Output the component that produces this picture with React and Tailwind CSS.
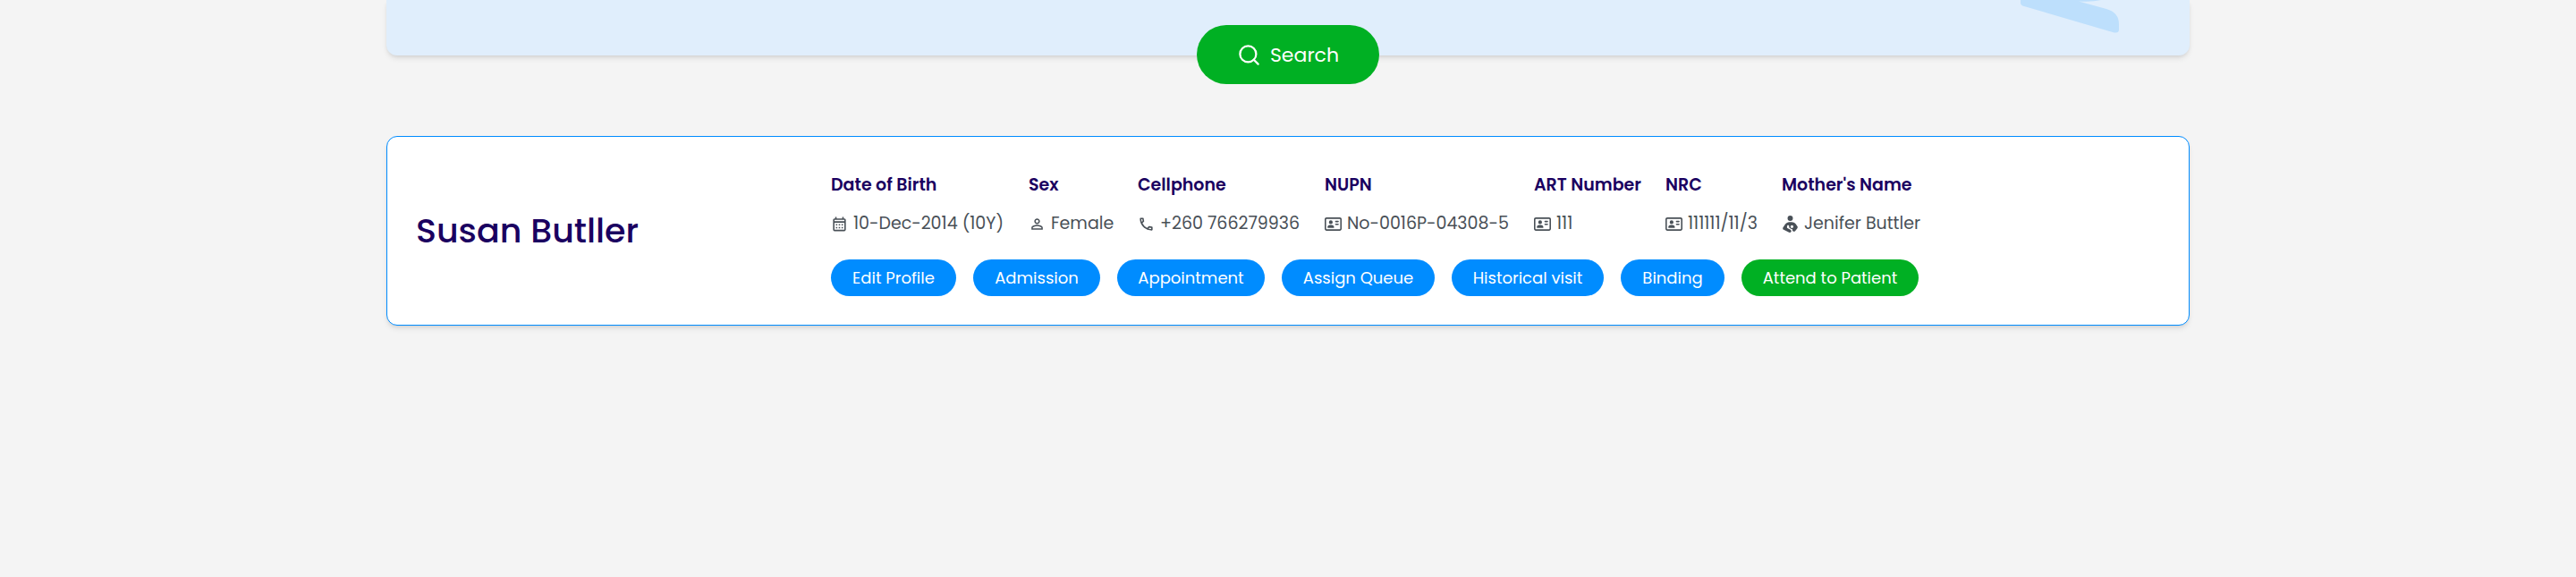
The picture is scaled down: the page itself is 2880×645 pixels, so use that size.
import { FiSearch } from "react-icons/fi";
import { MdOutlineCalendarMonth, MdOutlinePhone, MdPersonOutline } from "react-icons/md";
import { FaRegAddressCard, FaPersonBreastfeeding } from "react-icons/fa6";

const details = [
  { label: "Date of Birth", value: "10-Dec-2014 (10Y)", Icon: MdOutlineCalendarMonth, width: "min-w-[221px]" },
  { label: "Sex", value: "Female", Icon: MdPersonOutline, width: "min-w-[122px]" },
  { label: "Cellphone", value: "+260 766279936", Icon: MdOutlinePhone, width: "min-w-[209px]" },
  { label: "NUPN", value: "No-0016P-04308-5", Icon: FaRegAddressCard, width: "min-w-[234px]" },
  { label: "ART Number", value: "111", Icon: FaRegAddressCard, width: "min-w-[147px]" },
  { label: "NRC", value: "111111/11/3", Icon: FaRegAddressCard, width: "min-w-[130px]" },
  { label: "Mother's Name", value: "Jenifer Buttler", Icon: FaPersonBreastfeeding, width: "min-w-[160px]" },
];

const actions = [
  { label: "Edit Profile", style: "min-w-[140px] bg-[#008cff]" },
  { label: "Admission", style: "min-w-[142px] bg-[#008cff]" },
  { label: "Appointment", style: "min-w-[165px] bg-[#008cff]" },
  { label: "Assign Queue", style: "min-w-[171px] bg-[#008cff]" },
  { label: "Historical visit", style: "min-w-[170px] bg-[#008cff]" },
  { label: "Binding", style: "min-w-[116px] bg-[#008cff]" },
  { label: "Attend to Patient", style: "min-w-[198px] bg-[#00b023]" },
];

function SearchPanel() {
  return (
    <section className="relative flex h-[62px] justify-center rounded-b-xl bg-[#e0eefc] shadow-md">
      <svg className="absolute top-0 right-[78px]" width="111" height="38" viewBox="0 0 111 38" aria-hidden="true">
        <path
          fill="#bddffc"
          d="M0 0V3Q0 6 4 7L103 36Q110 38 110 33V27Q110 14 96 10L65 1.5Q80 2.4 90 0Z"
        />
      </svg>
      <button
        type="button"
        className="relative mt-7 flex h-[66px] w-[204px] shrink-0 items-center justify-center gap-[10px] rounded-full bg-[#00b023] text-[22px] text-white"
      >
        <FiSearch size={27} aria-hidden="true" />
        Search
      </button>
    </section>
  );
}

function PatientCard() {
  return (
    <article className="mt-[90px] flex items-center rounded-xl border border-[#008cff] bg-white px-8 shadow-md">
      <h2 className="w-[464px] shrink-0 text-[38px] leading-[60px] font-medium text-[#1a0060]">Susan Butller</h2>
      <div className="flex flex-col gap-[25px] pt-[39px] pb-8">
        <dl className="flex flex-wrap">
          {details.map(({ label, value, Icon, width }) => (
            <div key={label} className={`flex flex-col gap-[13px] leading-[30px] ${width}`}>
              <dt className="text-[19px] font-semibold text-[#1a0060]">{label}</dt>
              <dd className="flex items-center gap-[6px] text-[19px] whitespace-nowrap text-[#495057]">
                <Icon size={19} className="shrink-0" aria-hidden="true" />
                {value}
              </dd>
            </div>
          ))}
        </dl>
        <div className="flex flex-wrap gap-[19px]">
          {actions.map(({ label, style }) => (
            <button key={label} type="button" className={`h-[41px] rounded-full text-[18px] text-white ${style}`}>
              {label}
            </button>
          ))}
        </div>
      </div>
    </article>
  );
}

export default function App() {
  return (
    <main className="min-h-screen bg-[#f4f4f4] font-['Poppins','Inter',sans-serif]">
      <div className="mx-auto w-[70%]">
        <SearchPanel />
        <PatientCard />
      </div>
    </main>
  );
}
